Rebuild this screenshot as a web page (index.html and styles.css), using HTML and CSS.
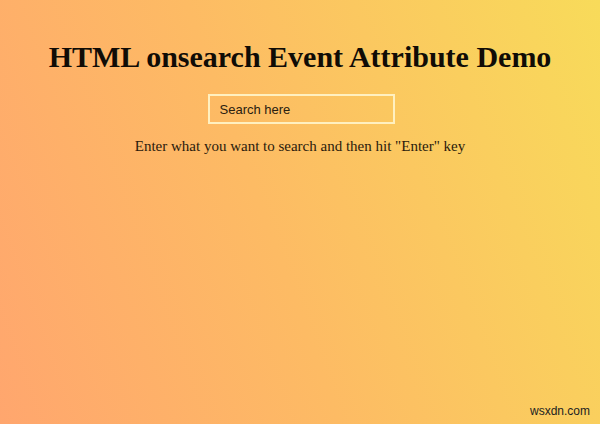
FILE: index.html
```html
<!DOCTYPE html>
<html>
<head>
<meta charset="utf-8">
<link rel="stylesheet" href="styles.css">
</head>
<body>
<main class="page">
  <h1 class="title">HTML onsearch Event Attribute Demo</h1>
  <input class="search" type="search" placeholder="Search here">
  <p class="hint">Enter what you want to search and then hit "Enter" key</p>
</main>
<div class="mark">wsxdn.com</div>
</body>
</html>
```
FILE: styles.css
```css
html, body {
  margin: 0;
  padding: 0;
  height: 100%;
}
body {
  width: 600px;
  height: 424px;
  overflow: hidden;
  position: relative;
  background: linear-gradient(70deg, #ffa66e 0%, #fdbb64 45%, #f8db5a 100%);
  font-family: "Liberation Serif", "Times New Roman", serif;
  color: #111;
}
.page {
  display: flex;
  flex-direction: column;
  align-items: center;
  padding-top: 40px;
}
.title {
  margin: 0;
  font-size: 30px;
  font-weight: bold;
  color: #100c06;
  line-height: 34px;
}
.search {
  margin-top: 20px;
  margin-left: 2px;
  width: 187px;
  height: 30px;
  box-sizing: border-box;
  border: 2px solid #fff0c0;
  background: transparent;
  padding: 0 10px;
  font-family: "Liberation Sans", Arial, sans-serif;
  font-size: 13px;
  outline: none;
  -webkit-appearance: none;
  appearance: none;
}
.search::placeholder {
  color: #2a2010;
  opacity: 1;
}
.hint {
  margin: 14px 0 0;
  font-size: 15px;
  color: #2a1a0c;
}
.mark {
  position: absolute;
  right: 10px;
  bottom: 6px;
  font-family: "Liberation Sans", Arial, sans-serif;
  font-size: 12px;
  color: #222;
}
```
